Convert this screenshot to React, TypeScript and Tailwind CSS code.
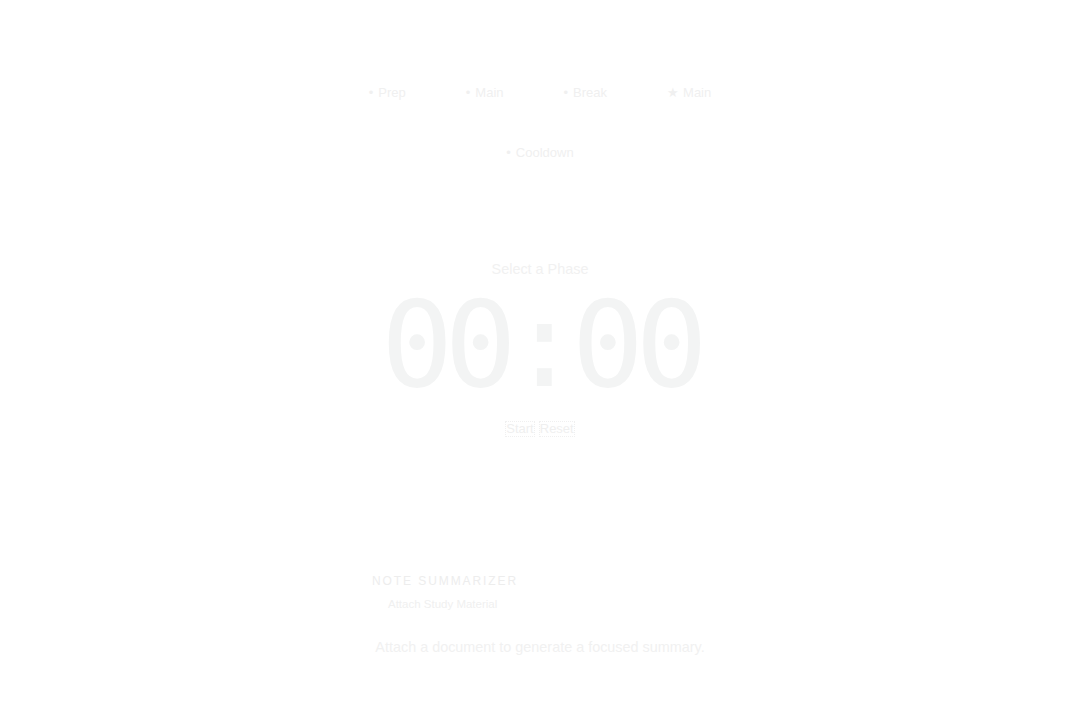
import React, { useState } from 'react';

const phases = [
    { label: 'Prep', mark: '•' },
    { label: 'Main', mark: '•' },
    { label: 'Break', mark: '•' },
    { label: 'Main', mark: '★' },
    { label: 'Cooldown', mark: '•' },
];

const App: React.FC = () => {
    const [seconds, setSeconds] = useState(0);
    const mm = String(Math.floor(seconds / 60)).padStart(2, '0');
    const ss = String(seconds % 60).padStart(2, '0');

    return (
        <div className="min-h-screen bg-white font-['Liberation_Sans',Arial,sans-serif]">
            <div className="mx-auto flex w-[400px] flex-col items-center pt-[85px]">
                {/* Phase list */}
                <div className="flex flex-wrap justify-center gap-x-[60px] gap-y-[45px] text-[13px] leading-[15px] text-[#f0f0f0]">
                    {phases.map((p, i) => (
                        <div key={i} className="flex items-center">
                            <span className={p.mark === '★' ? 'mr-[4px]' : 'mr-[5px]'}>{p.mark}</span>
                            <span>{p.label}</span>
                        </div>
                    ))}
                </div>

                {/* Timer */}
                <p className="mt-[101px] text-[14.4px] leading-[16px] text-[#f1f1f1]">Select a Phase</p>
                <div className="mt-[8px] font-['DejaVu_Sans_Mono',monospace] text-[120px] leading-none tracking-[-0.072em] text-[#f3f4f4]">
                    {mm}:{ss}
                </div>
                <div className="mt-[16px] flex gap-[4px] text-[13px] leading-[14px] text-[#efefef]">
                    <button className="border border-dotted border-[#f0f0f0]" onClick={() => setSeconds(s => s + 60)}>Start</button>
                    <button className="border border-dotted border-[#f0f0f0]" onClick={() => setSeconds(0)}>Reset</button>
                </div>
            </div>

            {/* Note summarizer */}
            <div className="mx-auto mt-[137px] w-[336px]">
                <h2 className="text-[12px] leading-[14px] tracking-[0.16em] text-[#ededed]">NOTE SUMMARIZER</h2>
                <label className="mt-[10px] block pl-[16px] text-[11.5px] leading-[13px] text-[#f0f0f0]">Attach Study Material</label>
                <p className="mt-[28px] text-center text-[14.4px] leading-[16px] text-[#f1f1f1]">
                    Attach a document to generate a focused summary.
                </p>
            </div>
        </div>
    );
};

export default App;
